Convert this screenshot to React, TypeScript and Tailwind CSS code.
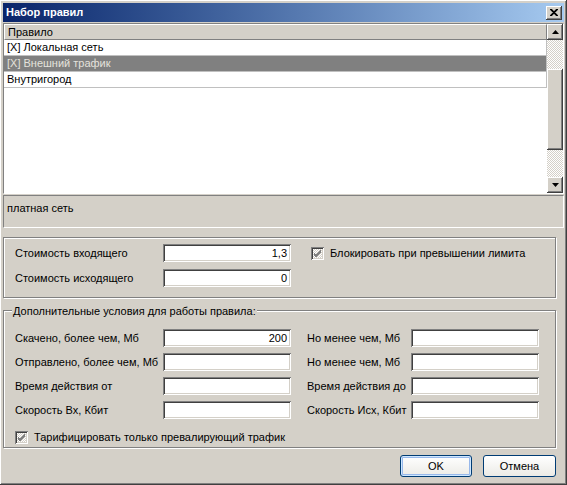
import React from "react"

const raised =
  "shadow-[inset_-1px_-1px_0_#404040,inset_1px_1px_0_#ffffff,inset_-2px_-2px_0_#808080,inset_2px_2px_0_#d4d0c8]"
const sunken =
  "shadow-[inset_1px_1px_0_#808080,inset_-1px_-1px_0_#ffffff,inset_2px_2px_0_#404040,inset_-2px_-2px_0_#d4d0c8]"
const etched = "border border-[#808080] shadow-[1px_1px_0_#ffffff,inset_1px_1px_0_#ffffff]"

function Field({ value = "", w = "w-[128px]" }: { value?: string; w?: string }) {
  return (
    <div className={`${w} h-[18px] bg-white ${sunken} flex items-center justify-end pr-[4px] shrink-0`}>
      {value}
    </div>
  )
}

function Check({ label }: { label: string }) {
  return (
    <div className="flex items-center gap-[6px]">
      <div className={`w-[13px] h-[13px] ${sunken} bg-[repeating-conic-gradient(#d4d0c8_0_25%,#ffffff_0_50%)] bg-[length:2px_2px] flex items-center justify-center`}>
        <svg width="9" height="9" viewBox="0 0 9 9">
          <path d="M1 4 L3 6 L8 1 M1 5 L3 7 L8 2 M1 6 L3 8 L8 3" stroke="#808080" strokeWidth="1" fill="none" />
        </svg>
      </div>
      <span>{label}</span>
    </div>
  )
}

function ScrollBtn({ down }: { down?: boolean }) {
  return (
    <div className={`w-[16px] h-[16px] bg-[#d4d0c8] ${raised} flex items-center justify-center shrink-0`}>
      <svg width="7" height="4" viewBox="0 0 7 4">
        <path d={down ? "M0 0 H7 L3.5 4 Z" : "M0 4 H7 L3.5 0 Z"} fill="#000" />
      </svg>
    </div>
  )
}

const rules = [
  { name: "[X] Локальная сеть", selected: false },
  { name: "[X] Внешний трафик", selected: true },
  { name: "Внутригород", selected: false },
]

export default function App() {
  return (
    <div
      className={`w-[567px] h-[485px] bg-[#d4d0c8] p-[3px] flex flex-col text-[11px] text-black leading-none ${raised}`}
      style={{ fontFamily: '"Liberation Sans", Arial, sans-serif' }}
    >
      {/* title bar */}
      <div className="h-[19px] bg-linear-to-r from-[#0a246a] to-[#a6caf0] flex items-center justify-between pl-[3px] pr-[2px] shrink-0">
        <span className="text-white font-bold text-[11px]">Набор правил</span>
        <div className={`w-[16px] h-[14px] bg-[#d4d0c8] ${raised} flex items-center justify-center`}>
          <svg width="8" height="7" viewBox="0 0 8 7">
            <path d="M0 0 L7 7 M1 0 L8 7 M7 0 L0 7 M8 0 L1 7" stroke="#000" strokeWidth="1.2" />
          </svg>
        </div>
      </div>

      {/* rule list */}
      <div className="mt-px h-[171px] flex border-t border-l border-[#808080] border-r border-r-white border-b border-b-white shrink-0">
        <div className="flex-1 bg-white flex flex-col">
          <div className="h-[16px] bg-[#d4d0c8] border-t border-l border-white border-r border-r-[#808080] border-b border-b-[#808080] flex items-center pl-[3px]">
            Правило
          </div>
          {rules.map(r => (
            <div
              key={r.name}
              className={`h-[16px] flex items-center pl-[3px] border-b border-r border-[#c0c0c0] ${r.selected ? "bg-[#808080] text-[#e4e2dc]" : "bg-white"}`}
            >
              {r.name}
            </div>
          ))}
        </div>
        <div className="w-[16px] flex flex-col bg-[repeating-conic-gradient(#d4d0c8_0_25%,#ffffff_0_50%)] bg-[length:2px_2px]">
          <ScrollBtn />
          <div className="h-[29px]" />
          <div className={`h-[81px] bg-[#d4d0c8] ${raised}`} />
          <div className="flex-1" />
          <ScrollBtn down />
        </div>
      </div>

      {/* description */}
      <div className="mt-px h-[33px] border-t border-l border-[#808080] border-r border-r-white border-b border-b-white pl-[3px] pt-[7px] shrink-0">
        платная сеть
      </div>

      {/* cost group */}
      <div className={`mt-[9px] w-[553px] h-[61px] ${etched} pl-[11px] pt-[6px] flex flex-col gap-[7px] shrink-0`}>
        <div className="flex items-center">
          <span className="w-[148px]">Стоимость входящего</span>
          <Field value="1,3" />
          <div className="ml-[20px]">
            <Check label="Блокировать при превышении лимита" />
          </div>
        </div>
        <div className="flex items-center">
          <span className="w-[148px]">Стоимость исходящего</span>
          <Field value="0" />
        </div>
      </div>

      {/* extra conditions group */}
      <div className={`relative mt-[12px] w-[553px] h-[138px] ${etched} pl-[11px] pt-[18px] flex flex-col gap-[6px] shrink-0`}>
        <span className="absolute -top-[5px] left-[8px] px-px bg-[#d4d0c8]">
          Дополнительные условия для работы правила:
        </span>
        {[
          ["Скачено, более чем, Мб", "200", "Но менее чем, Мб"],
          ["Отправлено, более чем, Мб", "", "Но менее чем, Мб"],
          ["Время действия от", "", "Время действия до"],
          ["Скорость Вх, Кбит", "", "Скорость Исх, Кбит"],
        ].map(([l, v, r], i) => (
          <div key={i} className="flex items-center">
            <span className="w-[148px]">{l}</span>
            <Field value={v} />
            <span className="ml-[16px] w-[104px]">{r}</span>
            <Field />
          </div>
        ))}
        <div className="mt-[6px]">
          <Check label="Тарифицировать только превалирующий трафик" />
        </div>
      </div>

      {/* buttons */}
      <div className="mt-[7px] flex justify-end gap-[11px] pr-[8px] shrink-0">
        <button className="w-[72px] h-[22px] rounded-[3px] border border-[#003c74] bg-linear-to-b from-white to-[#ecebe6] shadow-[inset_0_0_0_1px_#cee7ff,inset_0_0_0_2px_#98b8ea] flex items-center justify-center">
          OK
        </button>
        <button className="w-[73px] h-[22px] rounded-[3px] border border-[#003c74] bg-linear-to-b from-white to-[#ecebe6] flex items-center justify-center">
          Отмена
        </button>
      </div>
    </div>
  )
}
